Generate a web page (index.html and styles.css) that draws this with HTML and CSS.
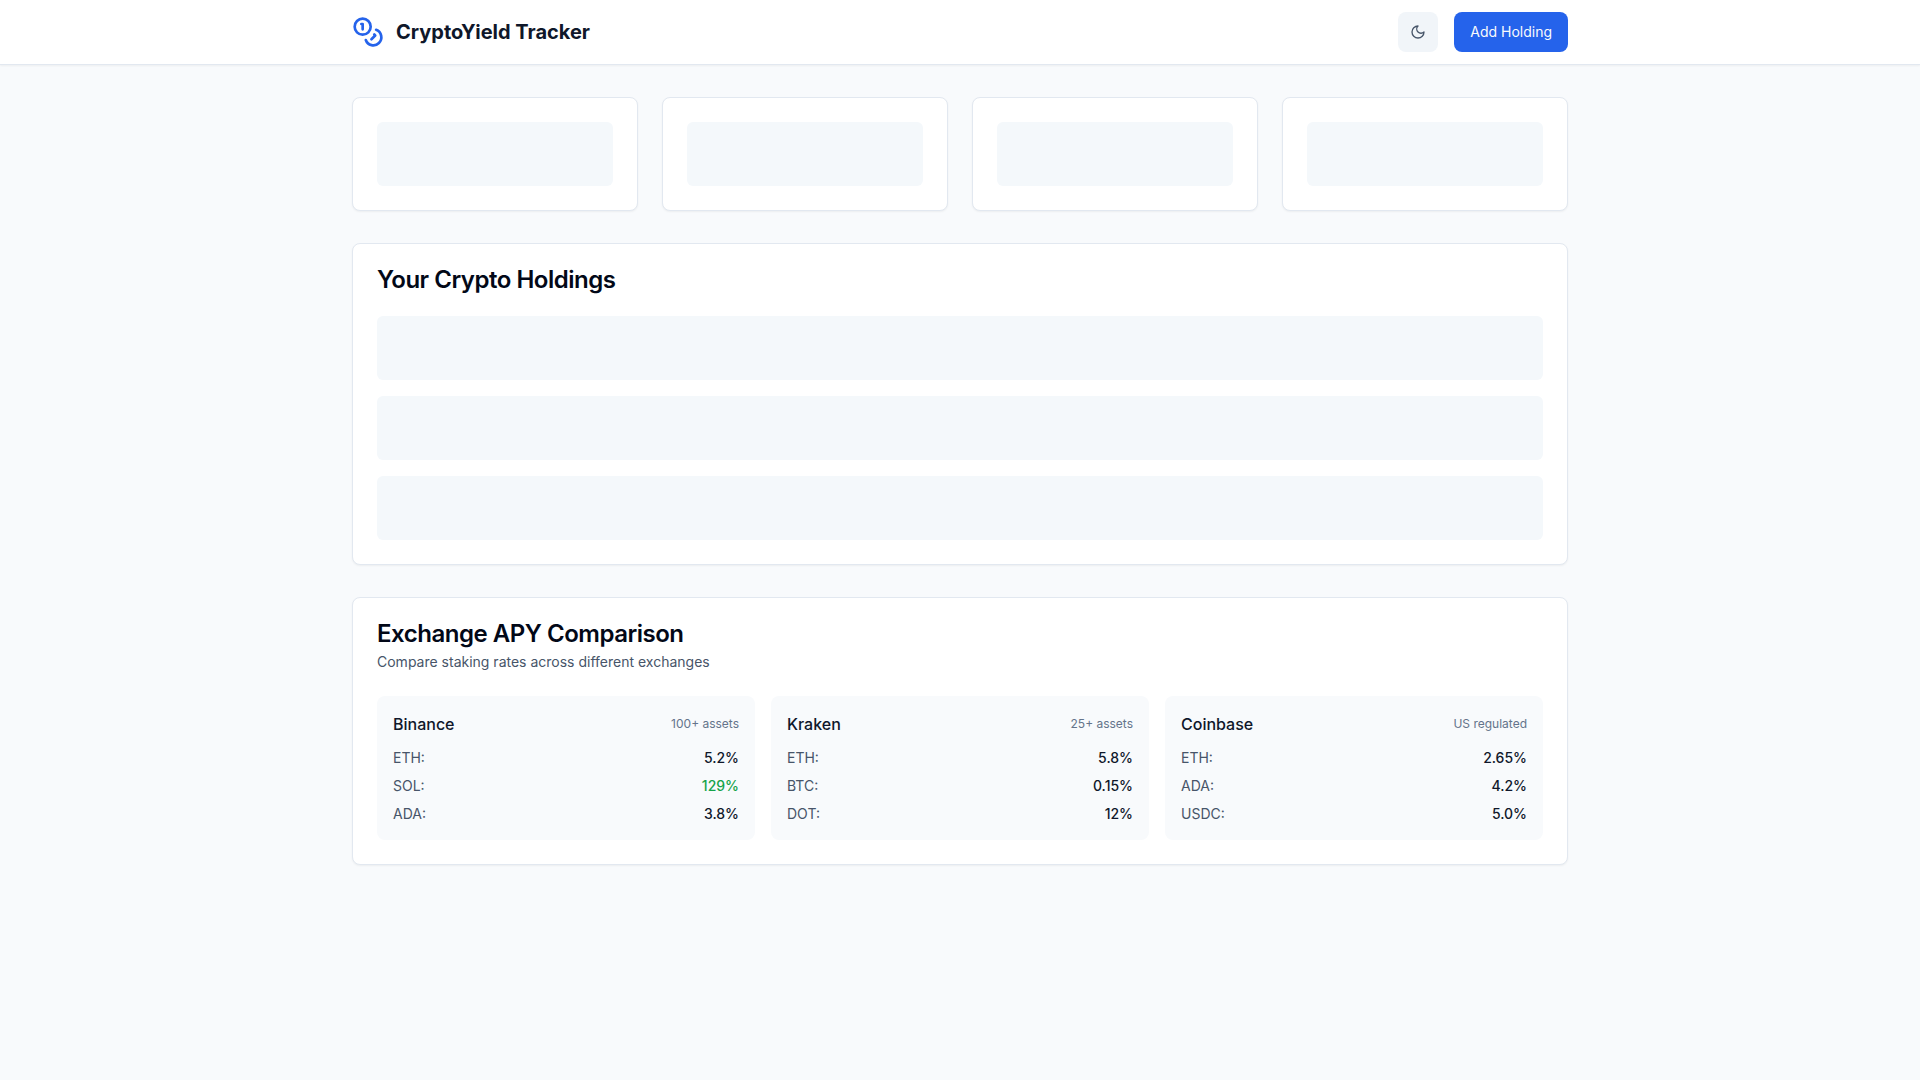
FILE: index.html
```html
<!DOCTYPE html>
<html lang="en">
<head>
<meta charset="utf-8">
<meta name="viewport" content="width=device-width, initial-scale=1">
<title>CryptoYield Tracker</title>
<link rel="stylesheet" href="styles.css">
</head>
<body>
<header class="site-header">
  <div class="container header-row">
    <div class="brand">
      <svg class="brand-icon" viewBox="0 0 24 24" aria-hidden="true"><circle cx="8" cy="8" r="6"/><path d="M18.09 10.37A6 6 0 1 1 10.34 18"/><path d="M7 6h1v4"/><path d="m16.71 13.88.7.71-2.82 2.82"/></svg>
      <h1 class="brand-name">CryptoYield Tracker</h1>
    </div>
    <div class="actions">
      <button class="theme-button" type="button" aria-label="Toggle theme">
        <svg class="theme-icon" viewBox="0 0 24 24" aria-hidden="true"><path d="M12 3a6 6 0 0 0 9 9 9 9 0 1 1-9-9Z"/></svg>
      </button>
      <button class="add-button" type="button">Add Holding</button>
    </div>
  </div>
</header>
<main class="container content">
  <section class="stats" aria-label="Portfolio summary">
    <div class="card"><div class="skeleton"></div></div>
    <div class="card"><div class="skeleton"></div></div>
    <div class="card"><div class="skeleton"></div></div>
    <div class="card"><div class="skeleton"></div></div>
  </section>
  <section class="card">
    <h2 class="card-title">Your Crypto Holdings</h2>
    <div class="holdings">
      <div class="skeleton"></div>
      <div class="skeleton"></div>
      <div class="skeleton"></div>
    </div>
  </section>
  <section class="card">
    <h2 class="card-title">Exchange APY Comparison</h2>
    <p class="card-subtitle">Compare staking rates across different exchanges</p>
    <div class="exchanges">
      <article class="exchange">
        <div class="exchange-head"><h3 class="exchange-name">Binance</h3><span class="exchange-note">100+ assets</span></div>
        <dl class="rates">
          <div class="rate"><dt>ETH:</dt><dd>5.2%</dd></div>
          <div class="rate"><dt>SOL:</dt><dd class="high">129%</dd></div>
          <div class="rate"><dt>ADA:</dt><dd>3.8%</dd></div>
        </dl>
      </article>
      <article class="exchange">
        <div class="exchange-head"><h3 class="exchange-name">Kraken</h3><span class="exchange-note">25+ assets</span></div>
        <dl class="rates">
          <div class="rate"><dt>ETH:</dt><dd>5.8%</dd></div>
          <div class="rate"><dt>BTC:</dt><dd>0.15%</dd></div>
          <div class="rate"><dt>DOT:</dt><dd>12%</dd></div>
        </dl>
      </article>
      <article class="exchange">
        <div class="exchange-head"><h3 class="exchange-name">Coinbase</h3><span class="exchange-note">US regulated</span></div>
        <dl class="rates">
          <div class="rate"><dt>ETH:</dt><dd>2.65%</dd></div>
          <div class="rate"><dt>ADA:</dt><dd>4.2%</dd></div>
          <div class="rate"><dt>USDC:</dt><dd>5.0%</dd></div>
        </dl>
      </article>
    </div>
  </section>
</main>
</body>
</html>
```
FILE: styles.css
```css
*, *::before, *::after { box-sizing: border-box; }
body, h1, h2, h3, p, dl, dd { margin: 0; }
body {
  min-height: 100vh;
  background: #f8fafc;
  color: #020817;
  font-family: Inter, "Liberation Sans", sans-serif;
  font-size: 14px;
  line-height: 20px;
  -webkit-font-smoothing: antialiased;
}
.container {
  width: 100%;
  max-width: 1280px;
  margin: 0 auto;
  padding: 0 32px;
}
.site-header {
  background: #fff;
  border-bottom: 1px solid #e2e8f0;
  box-shadow: 0 1px 2px rgba(0, 0, 0, 0.05);
}
.header-row {
  display: flex;
  align-items: center;
  justify-content: space-between;
  height: 64px;
}
.brand { display: flex; align-items: center; gap: 12px; }
.brand-icon, .theme-icon {
  fill: none;
  stroke: currentColor;
  stroke-width: 2;
  stroke-linecap: round;
  stroke-linejoin: round;
}
.brand-icon { width: 32px; height: 32px; color: #2563eb; }
.brand-name { font-size: 20px; line-height: 28px; font-weight: 700; color: #0f172a; }
.actions { display: flex; align-items: center; gap: 16px; }
button { border: 0; font: inherit; cursor: pointer; }
.theme-button {
  display: flex;
  align-items: center;
  justify-content: center;
  width: 40px;
  height: 40px;
  padding: 0;
  border-radius: 8px;
  background: #f1f5f9;
  color: #475569;
}
.theme-icon { width: 16px; height: 16px; }
.add-button {
  height: 40px;
  padding: 0 16px;
  border-radius: 8px;
  background: #2563eb;
  color: #f8fafc;
}
.content {
  display: flex;
  flex-direction: column;
  gap: 32px;
  padding-top: 32px;
  padding-bottom: 32px;
}
.stats { display: grid; grid-template-columns: repeat(4, 1fr); gap: 24px; }
.card {
  padding: 24px;
  border: 1px solid #e2e8f0;
  border-radius: 8px;
  background: #fff;
  box-shadow: 0 1px 2px rgba(0, 0, 0, 0.05);
}
.skeleton { height: 64px; border-radius: 6px; background: #f4f8fb; }
.card-title { font-size: 24px; line-height: 24px; font-weight: 600; letter-spacing: -0.02em; }
.holdings { display: grid; gap: 16px; margin-top: 24px; }
.card-subtitle { margin-top: 6px; color: #475569; }
.exchanges { display: grid; grid-template-columns: repeat(3, 1fr); gap: 16px; margin-top: 24px; }
.exchange { padding: 16px; border-radius: 8px; background: #f8fafc; }
.exchange-head {
  display: flex;
  align-items: center;
  justify-content: space-between;
  margin-bottom: 12px;
}
.exchange-name { font-size: 16px; line-height: 24px; font-weight: 500; color: #0f172a; }
.exchange-note { font-size: 12px; line-height: 16px; color: #64748b; }
.rates { display: grid; gap: 8px; }
.rate { display: flex; justify-content: space-between; }
.rate dt { color: #475569; }
.rate dd { font-weight: 500; color: #0f172a; }
.rate .high { color: #16a34a; }
```
